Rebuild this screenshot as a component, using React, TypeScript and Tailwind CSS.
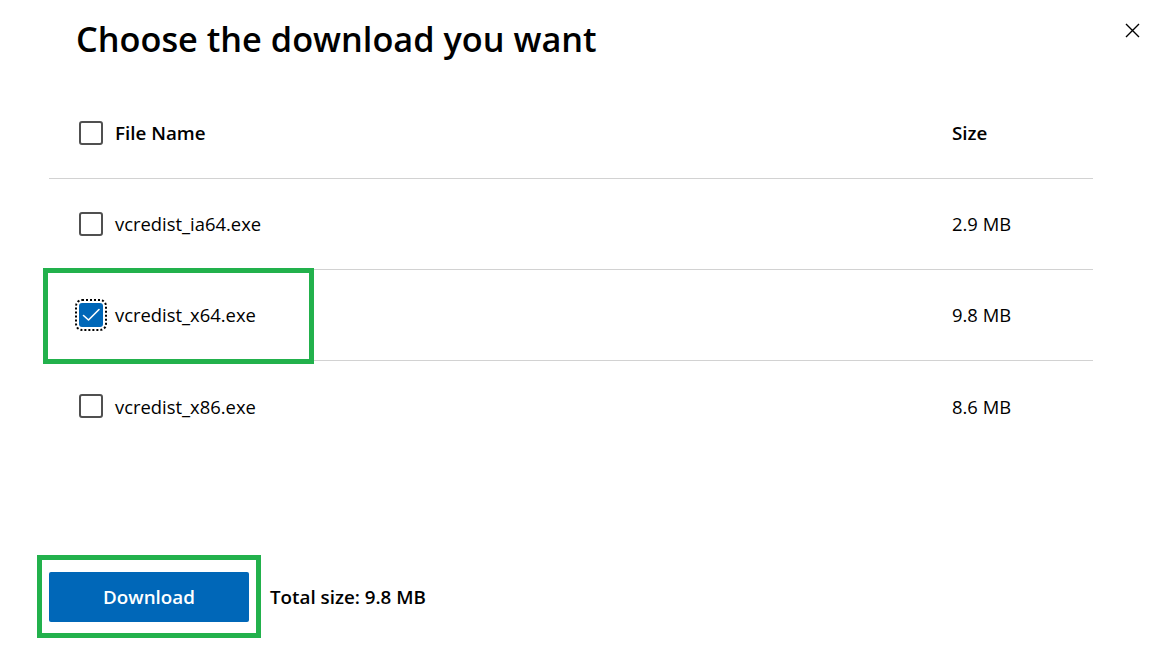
import React from "react";

const rows = [
  { name: "vcredist_ia64.exe", size: "2.9 MB", checked: false },
  { name: "vcredist_x64.exe", size: "9.8 MB", checked: true },
  { name: "vcredist_x86.exe", size: "8.6 MB", checked: false },
];

function Box({ checked }: { checked: boolean }) {
  if (checked) {
    return (
      <span className="relative flex h-[24px] w-[24px] shrink-0 items-center justify-center rounded-[3px] bg-[#0067b8] outline-[2.5px] outline-dotted outline-offset-[2px] outline-black">
        <svg width="24" height="24" viewBox="0 0 24 24" fill="none">
          <path d="M4.5 12.5 L9.5 17 L20 6.5" stroke="white" strokeWidth="1.6" strokeLinecap="round" strokeLinejoin="round" />
        </svg>
      </span>
    );
  }
  return <span className="block h-[24px] w-[24px] shrink-0 rounded-[3px] border-2 border-[#505050] bg-white" />;
}

export default function App() {
  return (
    <div
      className="relative h-[652px] w-[1163px] overflow-hidden bg-white text-black"
      style={{ fontFamily: '"Segoe UI", "Open Sans", "Noto Sans", sans-serif' }}
    >
      <button className="absolute left-[1124px] top-[22px] flex h-[16px] w-[16px] items-center justify-center">
        <svg width="15" height="15" viewBox="0 0 15 15">
          <path d="M1 1 L14 14 M14 1 L1 14" stroke="black" strokeWidth="1.4" />
        </svg>
      </button>

      <div className="ml-[49px] w-[1044px]">
        <h1 className="h-[90px] pl-[27px] pt-[14px] text-[34.3px] font-semibold leading-[50px]">
          Choose the download you want
        </h1>

        <div className="flex h-[89px] items-center border-b border-[#d2d2d2] pl-[30px] pb-[2px] text-[18.8px] font-semibold">
          <div className="flex flex-1 items-center gap-[12px]">
            <Box checked={false} />
            <span>File Name</span>
          </div>
          <div className="w-[141px]">Size</div>
        </div>

        {rows.map((r, i) => (
          <div
            key={r.name}
            className={`flex h-[91px] items-center pl-[30px] text-[18.4px] ${i < rows.length - 1 ? "border-b border-[#d2d2d2]" : ""}`}
          >
            <div className="flex flex-1 items-center gap-[12px]">
              <Box checked={r.checked} />
              <span>{r.name}</span>
            </div>
            <div className="w-[141px]">{r.size}</div>
          </div>
        ))}

        <div className="mt-[120px] flex items-center gap-[21px]">
          <button className="flex h-[50px] w-[200px] items-center justify-center rounded-[2px] bg-[#0067b8] text-[18.8px] font-semibold text-white">
            Download
          </button>
          <span className="text-[18.8px] font-semibold">Total size: 9.8 MB</span>
        </div>
      </div>

      <div className="pointer-events-none absolute left-[43px] top-[268px] h-[96px] w-[271px] border-[5px] border-[#22b14c]" />
      <div className="pointer-events-none absolute left-[37px] top-[555px] h-[83px] w-[224px] border-[5px] border-[#22b14c]" />
    </div>
  );
}
